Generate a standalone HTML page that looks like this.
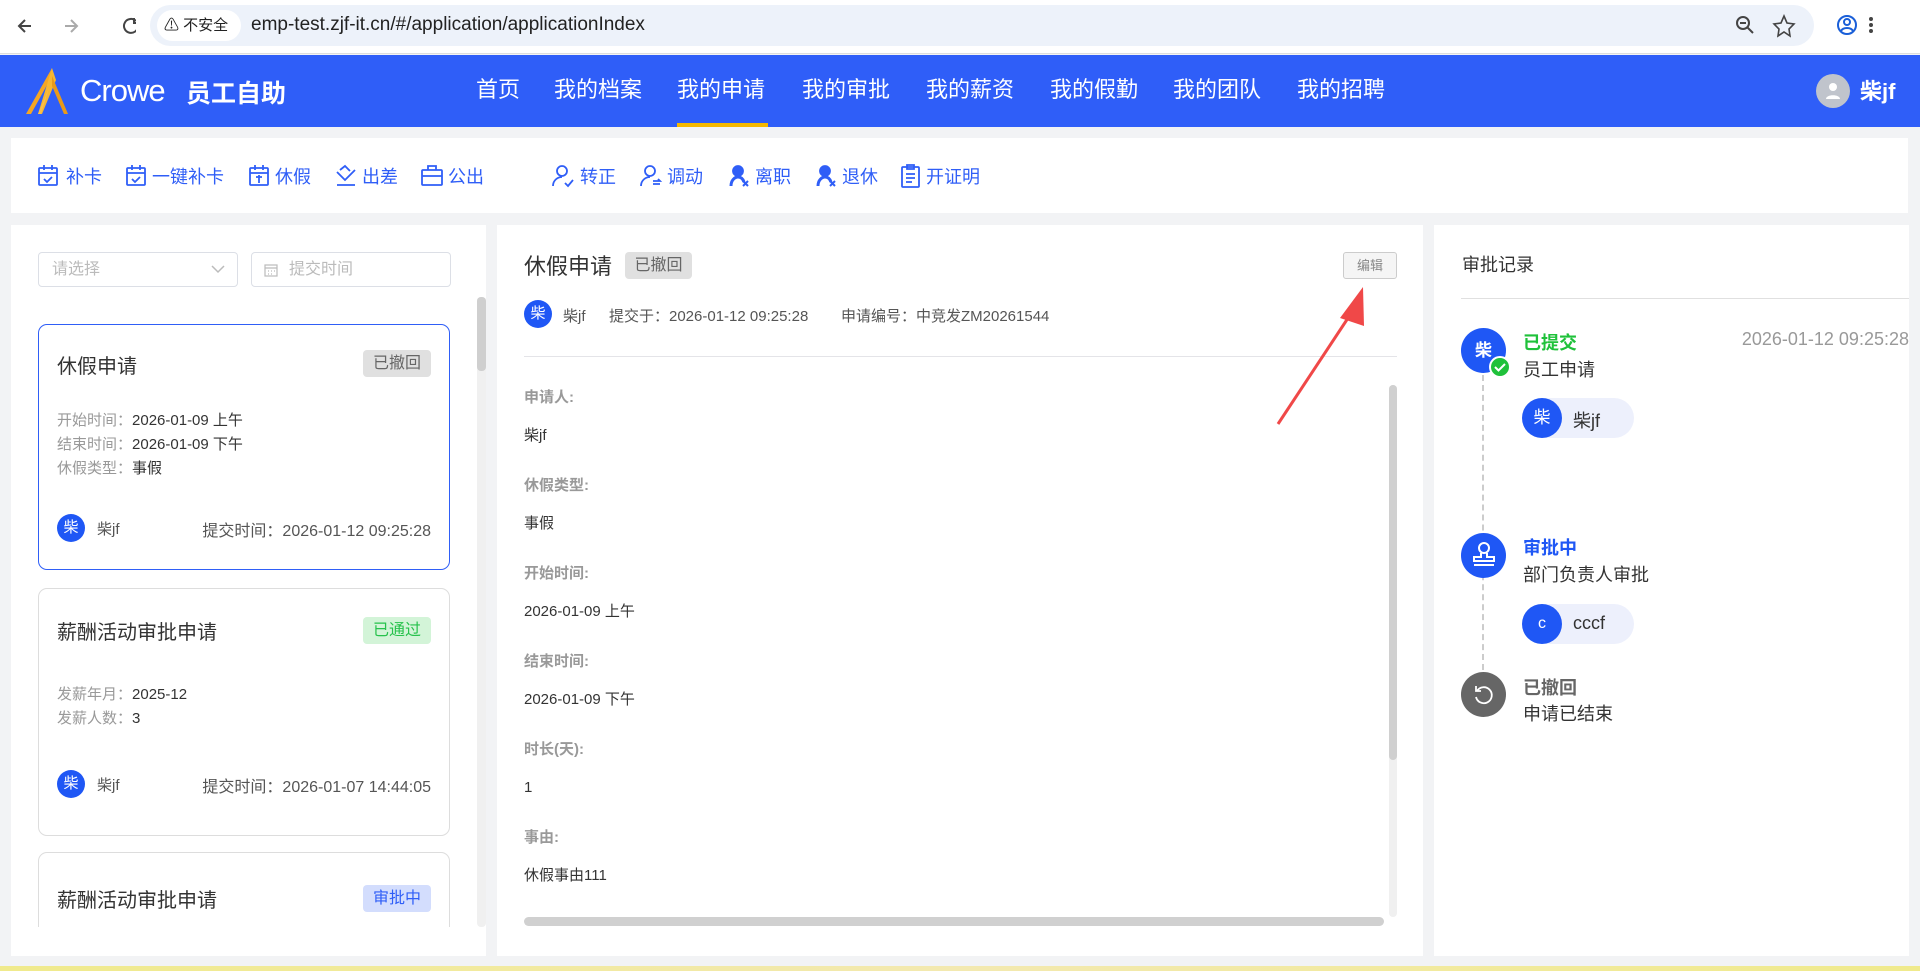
<!DOCTYPE html>
<html><head><meta charset="utf-8">
<style>
*{margin:0;padding:0;box-sizing:border-box}
html,body{width:1920px;height:971px;overflow:hidden}
body{background:#f2f3f5;font-family:"Liberation Sans","Noto Sans CJK SC",sans-serif;position:relative;color:#333}
.a{position:absolute;white-space:nowrap}
.chrome{left:0;top:0;width:1920px;height:54px;background:#fff;border-bottom:1px solid #ddd}
.hdr{left:0;top:55px;width:1920px;height:72px;background:#2f5ef8}
.nav{color:#fff;font-size:22px;top:72px}
.tb{color:#2f5ef7;font-size:18px;top:163px}
.panel{background:#fff}
.lbl{color:#999}
.av{border-radius:50%;background:#1f57f5;color:#fff;text-align:center;font-size:15px}
.card{border:1px solid #ddd;border-radius:9px;background:#fff;width:412px}
.badge{border-radius:4px;font-size:16px;text-align:center;line-height:27px;width:68px;height:27px}
</style></head><body>
<!-- chrome -->
<div class="a chrome"></div>
<svg class="a" style="left:16px;top:15px" width="120" height="22" viewBox="0 0 120 22" fill="none" stroke="#444" stroke-width="2"><path d="M15 11H4M9 5L3 11l6 6"/><path stroke="#aaa" d="M49 11h11M55 5l6 6-6 6"/><path d="M122 11a7 7 0 1 1-2-5"/><path d="M118 3v5h5"/></svg>
<div class="a" style="left:150px;top:5px;width:1664px;height:41px;border-radius:21px;background:#edf2fa"></div>
<div class="a" style="left:157px;top:10px;width:84px;height:31px;border-radius:16px;background:#fff;font-size:15px;line-height:31px;padding-left:7px;color:#222">⚠ 不安全</div>
<div class="a" style="left:251px;top:14px;font-size:19px;color:#222">emp-test.zjf-it.cn/#/application/applicationIndex</div>
<svg class="a" style="left:1735px;top:14px" width="140" height="24" fill="none" stroke="#444" stroke-width="2"><circle cx="8" cy="9" r="6"/><path d="M12 13l6 6M5 9h6"/><path d="M49 2l3 7 7 1-5 5 1 7-6-4-6 4 1-7-5-5 7-1z" stroke-width="1.6"/><circle cx="112" cy="11" r="9" stroke="#1a5fd8"/><circle cx="112" cy="8" r="3" stroke="#1a5fd8"/><path d="M106 17c2-4 10-4 12 0" stroke="#1a5fd8"/><circle cx="136" cy="5" r="1" fill="#444"/><circle cx="136" cy="11" r="1" fill="#444"/><circle cx="136" cy="17" r="1" fill="#444"/></svg>
<!-- header -->
<div class="a hdr"></div>
<svg class="a" style="left:22px;top:68px" width="50" height="46" viewBox="0 0 50 46"><path d="M30 0L4 46h5L30 8z" fill="#f5a623"/><path d="M30 0l4 12-14 34h-4z" fill="#f7b733"/><path d="M30 8l16 38h-4L30 18z" fill="#e89a1a"/><path d="M27 20L16 46h3z" fill="#fbc04a"/></svg>
<div class="a" style="left:80px;top:73px;font-size:31px;color:#fff;letter-spacing:-1px">Crowe</div>
<div class="a" style="left:186px;top:74px;font-size:25px;color:#fff;font-weight:bold">员工自助</div>
<div class="a nav" style="left:476px">首页</div>
<div class="a nav" style="left:554px">我的档案</div>
<div class="a nav" style="left:677px">我的申请</div>
<div class="a nav" style="left:802px">我的审批</div>
<div class="a nav" style="left:926px">我的薪资</div>
<div class="a nav" style="left:1050px">我的假勤</div>
<div class="a nav" style="left:1173px">我的团队</div>
<div class="a nav" style="left:1297px">我的招聘</div>
<div class="a" style="left:677px;top:123px;width:91px;height:4px;background:#f5b800"></div>
<div class="a" style="left:1816px;top:74px;width:34px;height:34px;border-radius:50%;background:#c0c4cc"></div>
<svg class="a" style="left:1825px;top:82px" width="16" height="18"><circle cx="8" cy="5" r="4" fill="#fff"/><path d="M1 17c0-5 14-5 14 0z" fill="#fff"/></svg>
<div class="a" style="left:1860px;top:74px;font-size:22px;color:#fff;font-weight:bold">柴jf</div>
<!-- toolbar -->
<div class="a panel" style="left:11px;top:138px;width:1897px;height:75px"></div>
<svg class="a" style="left:37px;top:164px" width="960" height="24" fill="none" stroke="#2f5ef7" stroke-width="1.8">
<g><rect x="2" y="4" width="18" height="17" rx="1"/><path d="M2 9h18M7 1v5M15 1v5M7 15l3 3 5-5"/></g>
<g transform="translate(88 0)"><rect x="2" y="4" width="18" height="17" rx="1"/><path d="M2 9h18M7 1v5M15 1v5M7 15l3 3 5-5"/></g>
<g transform="translate(211 0)"><rect x="2" y="4" width="18" height="17" rx="1"/><path d="M2 9h18M7 1v5M15 1v5M8 13h6M11 11v8"/></g>
<g transform="translate(297 0)"><path d="M3 8l8 8 10-10M3 21h18"/><path d="M6 6l5-4 5 5"/></g>
<g transform="translate(383 0)"><rect x="2" y="6" width="20" height="15" rx="1"/><path d="M8 6V2h8v4M2 12h20"/></g>
<g transform="translate(514 0)"><circle cx="11" cy="7" r="5"/><path d="M2 22c0-6 5-9 9-9M14 19l3 3 5-6"/></g>
<g transform="translate(602 0)"><circle cx="11" cy="7" r="5"/><path d="M2 22c0-6 5-9 9-9M14 17h7l-2-2M21 20h-7"/></g>
<g transform="translate(690 0)" fill="#2f5ef7"><circle cx="11" cy="7" r="5"/><path d="M4 22c0-6 4-9 7-9s5 2 6 5" fill="none" stroke-width="3"/><path d="M16 17l5 5M21 17l-5 5" stroke-width="2"/></g>
<g transform="translate(777 0)" fill="#2f5ef7"><circle cx="11" cy="7" r="5"/><path d="M4 22c0-6 4-9 7-9s5 2 6 5" fill="none" stroke-width="3"/><path d="M16 17l5 5M21 17l-5 5" stroke-width="2"/></g>
<g transform="translate(862 0)"><rect x="3" y="3" width="17" height="20" rx="1"/><path d="M8 1h7v4H8zM7 10h9M7 14h9M7 18h6"/></g>
</svg>
<div class="a tb" style="left:66px">补卡</div>
<div class="a tb" style="left:152px">一键补卡</div>
<div class="a tb" style="left:275px">休假</div>
<div class="a tb" style="left:362px">出差</div>
<div class="a tb" style="left:448px">公出</div>
<div class="a tb" style="left:580px">转正</div>
<div class="a tb" style="left:667px">调动</div>
<div class="a tb" style="left:755px">离职</div>
<div class="a tb" style="left:842px">退休</div>
<div class="a tb" style="left:926px">开证明</div>
<!-- left panel -->
<div class="a panel" style="left:11px;top:225px;width:475px;height:731px"></div>
<div class="a" style="left:38px;top:252px;width:200px;height:35px;border:1px solid #dcdfe6;border-radius:4px;font-size:16px;color:#bbb;line-height:33px;padding-left:13px">请选择<svg style="position:absolute;right:12px;top:12px" width="14" height="9" fill="none" stroke="#bbb" stroke-width="1.5"><path d="M1 1l6 6 6-6"/></svg></div>
<div class="a" style="left:251px;top:252px;width:200px;height:35px;border:1px solid #dcdfe6;border-radius:4px;font-size:16px;color:#bbb;line-height:33px;padding-left:37px">提交时间<svg style="position:absolute;left:12px;top:10px" width="14" height="14" fill="none" stroke="#bbb" stroke-width="1.2"><rect x="1" y="2" width="12" height="11"/><path d="M1 5h12M4 8h1M7 8h1M10 8h1M4 11h1M7 11h1"/></svg></div>
<div class="a" style="left:477px;top:297px;width:9px;height:630px;background:#f0f0f0;border-radius:4px"></div>
<div class="a" style="left:477px;top:297px;width:9px;height:74px;background:#cfcfcf;border-radius:4px"></div>
<div class="a" style="left:38px;top:296px;width:412px;height:631px;overflow:hidden">
 <div class="a card" style="left:0;top:28px;height:246px;border-color:#2f5ef7">
  <div class="a" style="left:18px;top:25px;font-size:20px">休假申请</div>
  <div class="a badge" style="left:324px;top:25px;background:#e0e0e0;color:#666">已撤回</div>
  <div class="a" style="left:18px;top:84px;font-size:15px;line-height:24px"><span class="lbl">开始时间：</span>2026-01-09 上午<br><span class="lbl">结束时间：</span>2026-01-09 下午<br><span class="lbl">休假类型：</span>事假</div>
  <div class="a av" style="left:18px;top:189px;width:28px;height:28px;line-height:28px">柴</div>
  <div class="a" style="left:58px;top:193px;font-size:15px;color:#555">柴jf</div>
  <div class="a" style="right:18px;top:192px;font-size:16px;color:#555">提交时间：2026-01-12 09:25:28</div>
 </div>
 <div class="a card" style="left:0;top:292px;height:248px">
  <div class="a" style="left:18px;top:27px;font-size:20px">薪酬活动审批申请</div>
  <div class="a badge" style="left:324px;top:28px;background:#d3f4d8;color:#27c24c">已通过</div>
  <div class="a" style="left:18px;top:94px;font-size:15px;line-height:24px"><span class="lbl">发薪年月：</span>2025-12<br><span class="lbl">发薪人数：</span>3</div>
  <div class="a av" style="left:18px;top:181px;width:28px;height:28px;line-height:28px">柴</div>
  <div class="a" style="left:58px;top:185px;font-size:15px;color:#555">柴jf</div>
  <div class="a" style="right:18px;top:184px;font-size:16px;color:#555">提交时间：2026-01-07 14:44:05</div>
 </div>
 <div class="a card" style="left:0;top:556px;height:248px">
  <div class="a" style="left:18px;top:31px;font-size:20px">薪酬活动审批申请</div>
  <div class="a badge" style="left:324px;top:32px;background:#d3ddfd;color:#2f5ef7">审批中</div>
 </div>
</div>
<!-- middle panel -->
<div class="a panel" style="left:497px;top:225px;width:926px;height:731px"></div>
<div class="a" style="left:524px;top:249px;font-size:22px">休假申请</div>
<div class="a badge" style="left:625px;top:252px;background:#e0e0e0;color:#666;width:67px">已撤回</div>
<div class="a" style="left:1343px;top:252px;width:54px;height:27px;border:1px solid #ccc;border-radius:3px;background:#f5f5f5;color:#888;font-size:13px;text-align:center;line-height:25px">编辑</div>
<div class="a av" style="left:524px;top:300px;width:28px;height:28px;line-height:28px">柴</div>
<div class="a" style="left:563px;top:305px;font-size:15px;color:#555">柴jf</div>
<div class="a" style="left:609px;top:305px;font-size:15px;color:#555">提交于：2026-01-12 09:25:28</div>
<div class="a" style="left:841px;top:305px;font-size:15px;color:#555">申请编号：中竞发ZM20261544</div>
<div class="a" style="left:524px;top:356px;width:873px;height:1px;background:#e4e4e8"></div>
<div class="a" style="left:524px;top:389px;font-size:15px;line-height:17px">
<div style="color:#999;font-weight:bold;height:38px">申请人:</div><div style="height:50px">柴jf</div>
<div style="color:#999;font-weight:bold;height:38px">休假类型:</div><div style="height:50px">事假</div>
<div style="color:#999;font-weight:bold;height:38px">开始时间:</div><div style="height:50px">2026-01-09 上午</div>
<div style="color:#999;font-weight:bold;height:38px">结束时间:</div><div style="height:50px">2026-01-09 下午</div>
<div style="color:#999;font-weight:bold;height:38px">时长(天):</div><div style="height:50px">1</div>
<div style="color:#999;font-weight:bold;height:38px">事由:</div><div style="height:40px">休假事由111</div>
</div>
<div class="a" style="left:1389px;top:385px;width:8px;height:532px;background:#f0f0f0;border-radius:4px"></div>
<div class="a" style="left:1389px;top:385px;width:8px;height:375px;background:#d0d0d0;border-radius:4px"></div>
<div class="a" style="left:524px;top:917px;width:860px;height:9px;background:#d0d0d0;border-radius:5px"></div>
<svg class="a" style="left:1270px;top:280px" width="110" height="150"><path d="M8 144L82 32" stroke="#f04848" stroke-width="3"/><path d="M93 7L70 38l24 8z" fill="#f04848"/></svg>
<!-- right panel -->
<div class="a panel" style="left:1434px;top:225px;width:475px;height:731px"></div>
<div class="a" style="left:1462px;top:251px;font-size:18px">审批记录</div>
<div class="a" style="left:1461px;top:298px;width:448px;height:1px;background:#e0e0e0"></div>
<div class="a" style="left:1482px;top:375px;height:295px;border-left:2px dashed #ccc"></div>
<div class="a av" style="left:1461px;top:328px;width:45px;height:45px;line-height:45px;font-size:17px;font-weight:bold">柴</div>
<svg class="a" style="left:1489px;top:356px" width="22" height="22"><circle cx="11" cy="11" r="10" fill="#1fc13a" stroke="#fff" stroke-width="2"/><path d="M6 11l3.5 3.5L16 8" stroke="#fff" stroke-width="2" fill="none"/></svg>
<div class="a" style="left:1523px;top:329px;font-size:18px;color:#1fc13a;font-weight:bold">已提交</div>
<div class="a" style="right:11px;top:329px;font-size:18px;color:#999">2026-01-12 09:25:28</div>
<div class="a" style="left:1523px;top:356px;font-size:18px">员工申请</div>
<div class="a" style="left:1522px;top:398px;width:112px;height:40px;border-radius:20px;background:#edf0fc"></div>
<div class="a av" style="left:1522px;top:398px;width:40px;height:40px;line-height:40px;font-size:17px">柴</div>
<div class="a" style="left:1573px;top:407px;font-size:18px">柴jf</div>
<div class="a av" style="left:1461px;top:533px;width:45px;height:45px"></div>
<svg class="a" style="left:1470px;top:541px" width="28" height="28" fill="none" stroke="#fff" stroke-width="2"><circle cx="14" cy="7" r="5"/><path d="M11 12v4H4v4h20v-4h-7v-4M4 24h20"/></svg>
<div class="a" style="left:1523px;top:534px;font-size:18px;color:#1f57f5;font-weight:bold">审批中</div>
<div class="a" style="left:1523px;top:561px;font-size:18px">部门负责人审批</div>
<div class="a" style="left:1522px;top:604px;width:112px;height:40px;border-radius:20px;background:#edf0fc"></div>
<div class="a av" style="left:1522px;top:604px;width:40px;height:40px;line-height:40px;font-size:16px">c</div>
<div class="a" style="left:1573px;top:613px;font-size:18px">cccf</div>
<div class="a" style="left:1461px;top:672px;width:45px;height:45px;border-radius:50%;background:#666"></div>
<svg class="a" style="left:1472px;top:683px" width="24" height="24" fill="none" stroke="#fff" stroke-width="1.8"><path d="M5 8a8 8 0 1 1-1 6"/><path d="M4 3v5h5"/></svg>
<div class="a" style="left:1523px;top:674px;font-size:18px;color:#666;font-weight:bold">已撤回</div>
<div class="a" style="left:1523px;top:700px;font-size:18px">申请已结束</div>
<!-- bottom -->
<div class="a" style="left:0;top:966px;width:1920px;height:5px;background:linear-gradient(90deg,#f0ea8c,#f3e9b0 50%,#f0ea8c)"></div>
</body></html>
